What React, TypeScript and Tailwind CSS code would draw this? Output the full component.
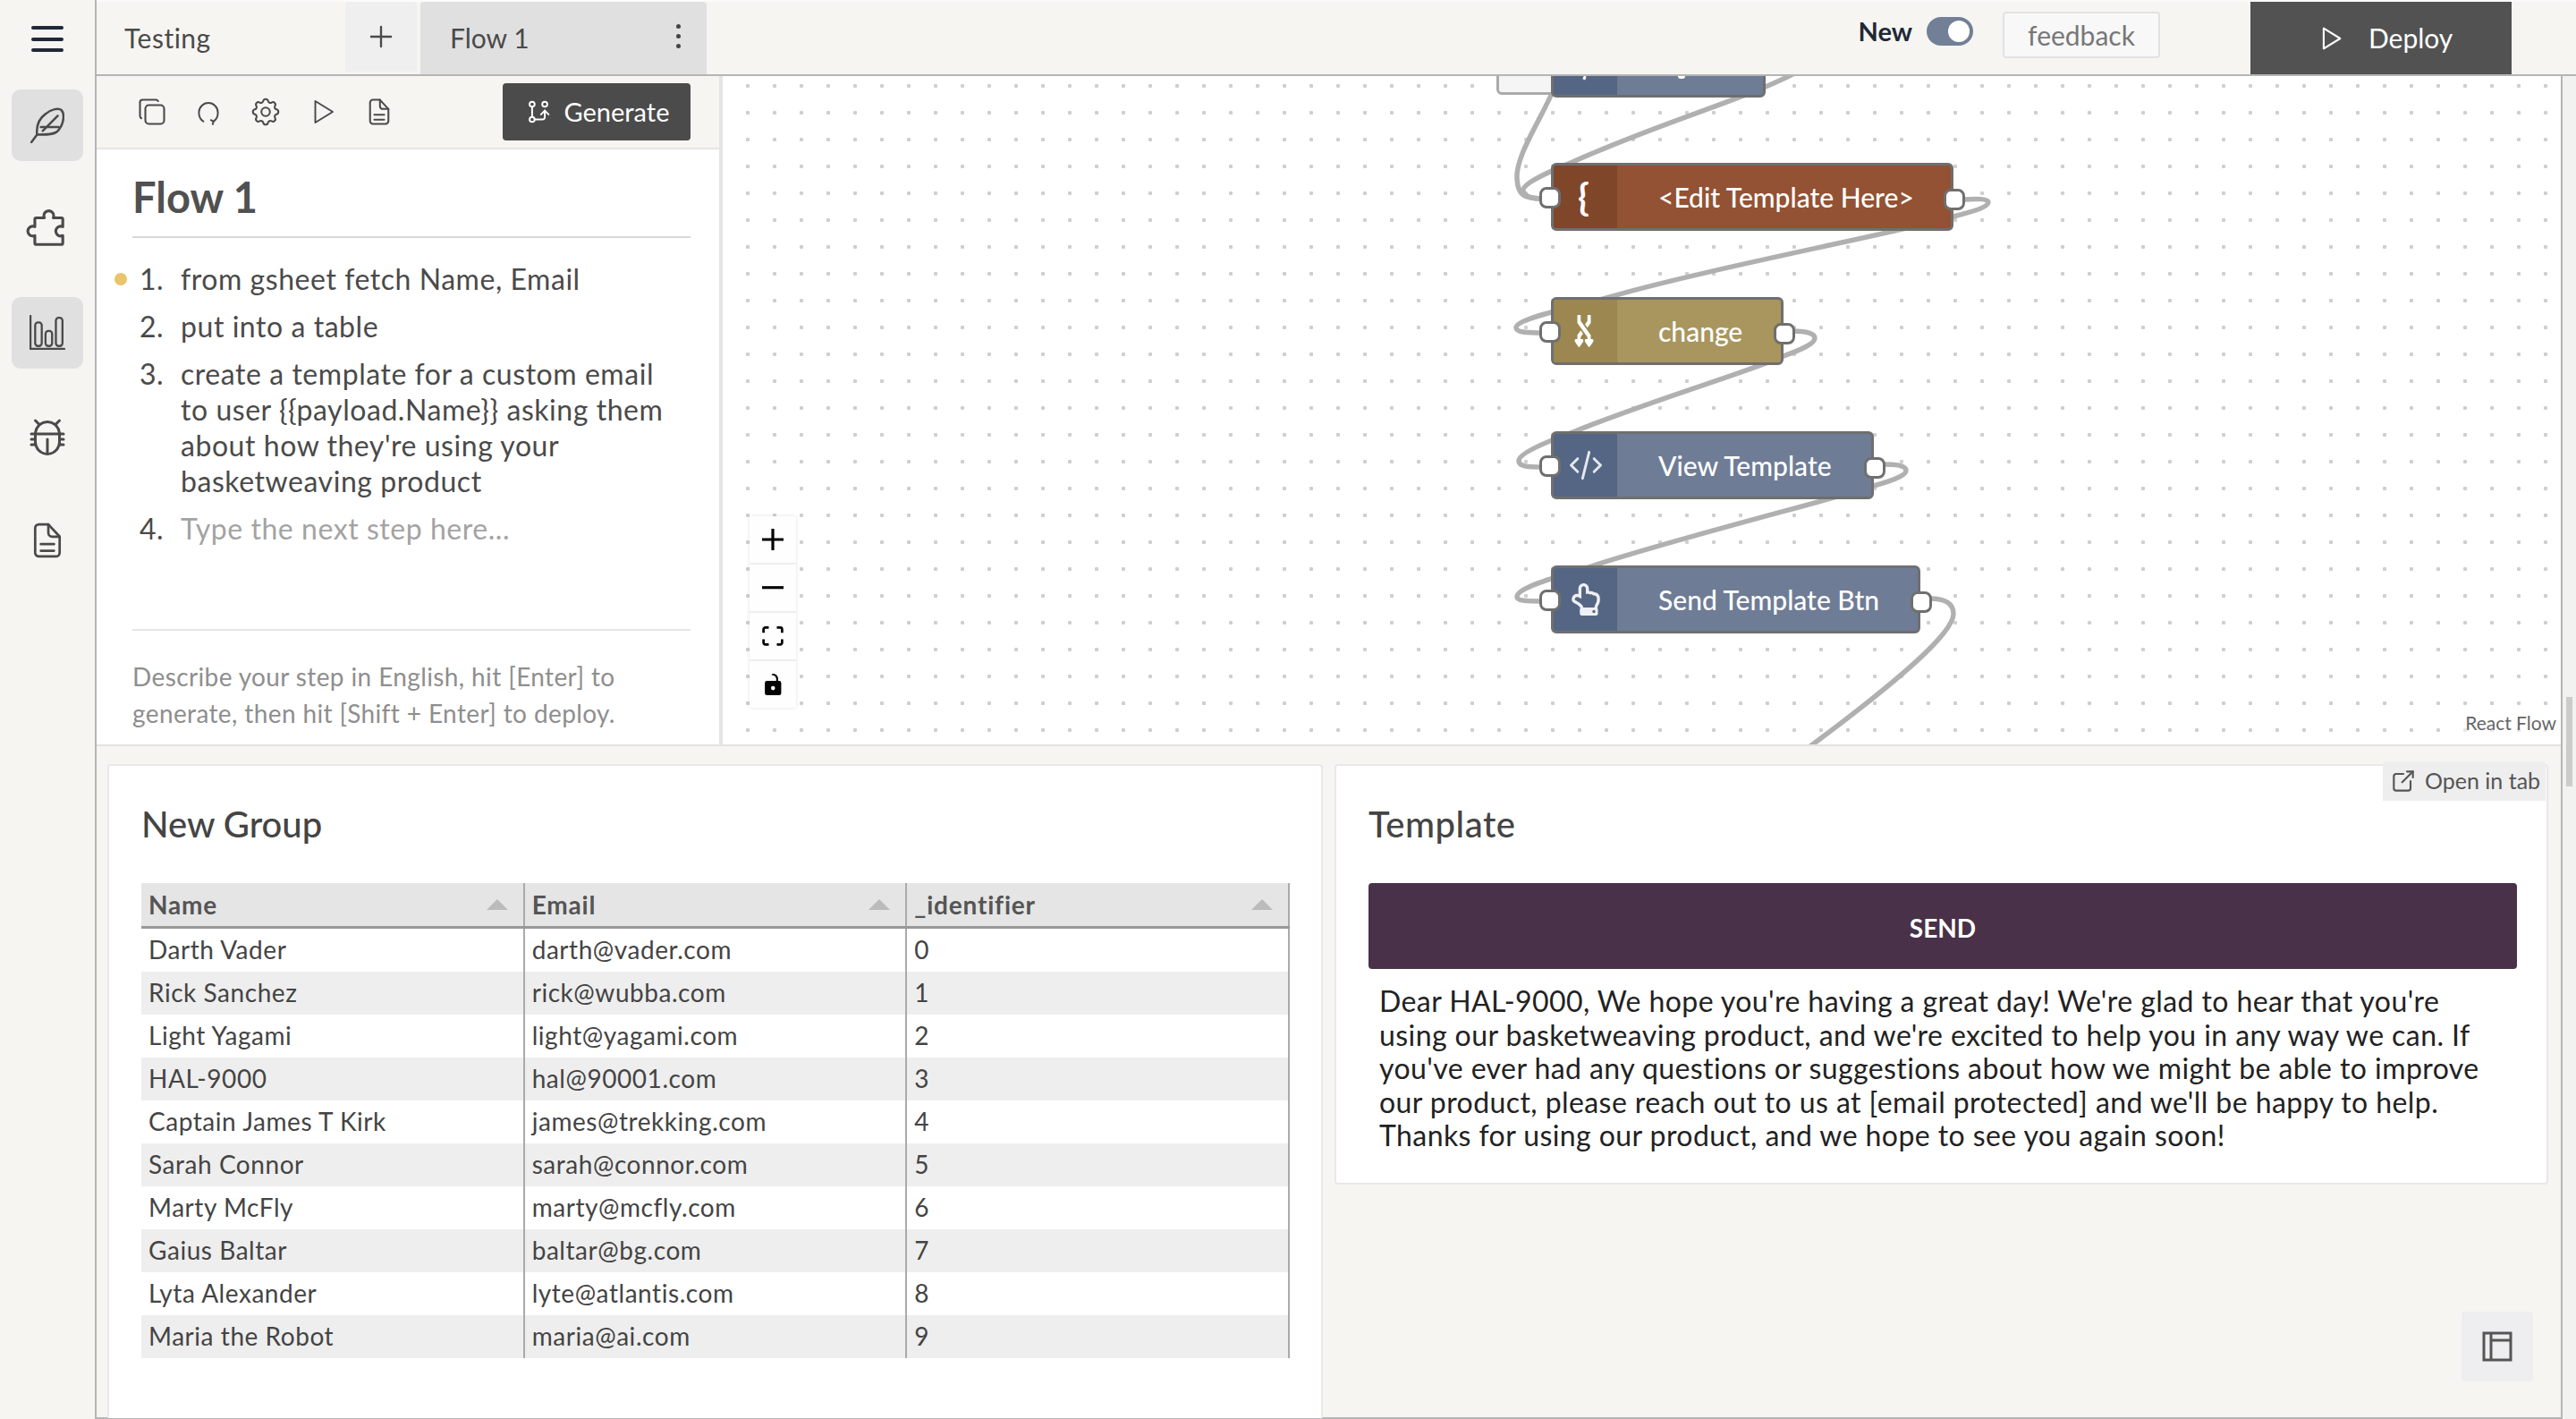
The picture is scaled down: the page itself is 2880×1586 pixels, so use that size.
import React from "react";
import { TbCopy, TbSettings, TbPlayerPlay, TbGitBranch, TbExternalLink, TbPlus, TbCode } from "react-icons/tb";
import { PiBugBeetle, PiPuzzlePiece } from "react-icons/pi";
import { FaRandom, FaRegHandPointUp } from "react-icons/fa";

const rows = [
  ["Darth Vader", "darth@vader.com", "0"],
  ["Rick Sanchez", "rick@wubba.com", "1"],
  ["Light Yagami", "light@yagami.com", "2"],
  ["HAL-9000", "hal@90001.com", "3"],
  ["Captain James T Kirk", "james@trekking.com", "4"],
  ["Sarah Connor", "sarah@connor.com", "5"],
  ["Marty McFly", "marty@mcfly.com", "6"],
  ["Gaius Baltar", "baltar@bg.com", "7"],
  ["Lyta Alexander", "lyte@atlantis.com", "8"],
  ["Maria the Robot", "maria@ai.com", "9"],
];

const edges = [
  "M1737 100 C1722 135 1694 175 1696 200 C1697 218 1704 222 1724 222",
  "M2010 80 C1950 112 1860 135 1756 182 C1742 188 1704 203 1703 212 C1702 219 1712 222 1724 222",
  "M2195 223 C2210 222 2223 222 2223 226 C2223 232 2200 238 2184 242 C2150 254 1900 302 1796 333 C1760 343 1695 356 1695 366 C1695 372 1710 372 1724 372",
  "M2004 370 C2018 370 2029 372 2029 378 C2029 385 2010 392 1994 398 C1960 414 1850 446 1761 482 C1745 488 1698 505 1698 515 C1698 522 1710 522 1724 522",
  "M2105 519 C2118 519 2131 520 2131 526 C2131 532 2112 538 2095 543 C2065 554 1880 600 1779 633 C1755 641 1696 655 1696 667 C1696 672 1710 672 1724 672",
  "M2158 669 C2175 669 2184 675 2184 686 C2184 710 2110 770 2024 834",
];

function Handle({ className }: { className: string }) {
  return <div className={`absolute w-[24px] h-[24px] bg-white border-[3px] border-[#6f6f6f] rounded-[8px] ${className}`} />;
}

function Node({ pos, iconBg, bodyBg, icon, label, leftHandle, rightHandle }: { pos: string; iconBg: string; bodyBg: string; icon: React.ReactNode; label: string; leftHandle: string; rightHandle: string }) {
  return (
    <div className={`absolute h-[76px] flex ${pos}`}>
      <div className={`w-full h-full rounded-[6px] border-[3px] border-[#6f6f6f] flex overflow-hidden ${bodyBg}`}>
        <div className={`w-[71px] h-full flex items-center justify-center text-white ${iconBg}`}>{icon}</div>
        <div className="pl-[46px] flex items-center text-white text-[30px] font-medium whitespace-nowrap">{label}</div>
      </div>
      <Handle className={`left-[-13px] ${leftHandle}`} />
      <Handle className={`right-[-13px] ${rightHandle}`} />
    </div>
  );
}

function NavItem({ active, children }: { active?: boolean; children: React.ReactNode }) {
  return <div className={`w-[80px] h-[80px] rounded-[10px] flex items-center justify-center text-[#4a4a4a] ${active ? "bg-[#e0e0e0]" : ""}`}>{children}</div>;
}

function ControlBtn({ children, last }: { children: React.ReactNode; last?: boolean }) {
  return <div className={`w-[52px] h-[52px] bg-[#fefefe] flex items-center justify-center ${last ? "" : "mb-[2px]"}`}>{children}</div>;
}

function Caret() {
  return <div className="w-0 h-0 border-l-[12px] border-r-[12px] border-b-[12px] border-l-transparent border-r-transparent border-b-[#bbbbbb]" />;
}

function DocIcon({ w, h }: { w: number; h: number }) {
  return (
    <svg width={w} height={h} viewBox="0 0 30 38" fill="none" stroke="currentColor" strokeWidth="2.6" strokeLinejoin="round" strokeLinecap="round">
      <path d="M2 6a4 4 0 0 1 4-4h10l12 13v17a4 4 0 0 1-4 4H6a4 4 0 0 1-4-4z" />
      <path d="M16 2v9a4 4 0 0 0 4 4h8" />
      <path d="M8 23h14M8 30h14" />
    </svg>
  );
}

export default function App() {
  return (
    <div className="w-[2880px] h-[1586px] flex overflow-hidden bg-[#f6f5f2] font-[Lato,'Noto_Sans',sans-serif] text-[#4a4a4a]">
      <aside className="w-[108px] shrink-0 border-r-2 border-[#b5b5b5] flex flex-col items-center">
        <div className="h-[100px] w-full flex flex-col items-center pt-[29px] gap-[8.5px]">
          <div className="w-[36px] h-[4px] rounded bg-[#1f2937]" />
          <div className="w-[36px] h-[4px] rounded bg-[#1f2937]" />
          <div className="w-[36px] h-[4px] rounded bg-[#1f2937]" />
        </div>
        <div className="flex flex-col gap-[36px]">
          <NavItem active>
            <svg width="38" height="40" viewBox="0 0 36 38" fill="none" stroke="currentColor" strokeWidth="2.4" strokeLinecap="round" strokeLinejoin="round">
              <path d="M7 29C6 20 9 12 16 7C22 2 30 0 33 3C37 8 35 20 28 26C24 29 16 29 7 29Z" />
              <path d="M1 37L7 29" />
              <path d="M29 9L13 25" />
              <path d="M11 21H30" />
            </svg>
          </NavItem>
          <NavItem><PiPuzzlePiece size={50} /></NavItem>
          <NavItem active>
            <svg width="40" height="40" viewBox="0 0 38 38" fill="none" stroke="currentColor" strokeWidth="2.2" strokeLinecap="round" strokeLinejoin="round">
              <path d="M1 1V36H37" />
              <rect x="6" y="8" width="7" height="25" rx="3" />
              <rect x="17" y="17" width="7" height="16" rx="3" />
              <rect x="28" y="3" width="7" height="30" rx="3" />
            </svg>
          </NavItem>
          <NavItem><PiBugBeetle size={48} /></NavItem>
          <NavItem><DocIcon w={32} h={40} /></NavItem>
        </div>
      </aside>

      <div className="flex-1 min-w-0 flex flex-col">
        <header className="h-[85px] shrink-0 flex border-t-2 border-t-[#fbfbfa] border-b-2 border-b-[#b5b5b5]">
          <div className="w-[278px] pl-[31px] flex items-center text-[30px] tracking-[0.5px]">Testing</div>
          <div className="w-[80px] h-[78px] bg-[#efefef] rounded-t-[4px] flex items-center justify-center"><TbPlus size={38} strokeWidth={1.5} /></div>
          <div className="ml-[4px] w-[320px] h-[81px] bg-[#e0e0e0] rounded-t-[4px] flex items-center justify-between pl-[33px] pr-[29px] text-[30px]">
            <span>Flow 1</span>
            <div className="flex flex-col gap-[6px] mb-[4px]">
              <div className="w-[5px] h-[5px] rounded-full bg-[#444]" />
              <div className="w-[5px] h-[5px] rounded-full bg-[#444]" />
              <div className="w-[5px] h-[5px] rounded-full bg-[#444]" />
            </div>
          </div>
          <div className="flex-1 flex items-start justify-end">
            <span className="mt-[11px] text-[29px] font-bold text-[#1f2937]">New</span>
            <div className="ml-[16px] mt-[17px] w-[52px] h-[32px] rounded-full bg-[#718096] flex items-center justify-end pr-[4px]">
              <div className="w-[24px] h-[24px] rounded-full bg-white" />
            </div>
            <div className="ml-[33px] mt-[11px] w-[176px] h-[52px] border-2 border-[#e2e2e2] rounded-[4px] bg-[#f8f8f8] flex items-center justify-center text-[30px] text-[#777]">feedback</div>
            <div className="ml-[101px] mr-[72px] w-[292px] h-[81px] bg-[#525252] flex items-center text-white text-[30px] pl-[72px] gap-[26px]">
              <TbPlayerPlay size={34} strokeWidth={1.5} />
              <span>Deploy</span>
            </div>
          </div>
        </header>

        <div className="flex-1 min-h-0 flex">
          <div className="flex-1 min-w-0 flex flex-col border-r-2 border-b-2 border-[#b5b5b5]">
            <div className="h-[749px] shrink-0 flex border-b-2 border-[#e2e2e0]">
              <section className="w-[700px] shrink-0 border-r-4 border-[#e5e5e5] flex flex-col bg-white">
                <div className="h-[82px] shrink-0 bg-[#f6f5f2] border-b-2 border-[#e5e5e3] flex items-center justify-between pl-[44px] pr-[32px]">
                  <div className="flex items-center gap-[28px] text-[#4a4a4a]">
                    <TbCopy size={36} strokeWidth={1.4} />
                    <svg width="34" height="34" viewBox="0 0 24 24" fill="none" stroke="currentColor" strokeWidth="1.4" strokeLinecap="round" strokeLinejoin="round"><path d="M8 19.5C5.5 18 4.5 15.5 4.5 12.5a7.5 7.5 0 0 1 15 0c0 3-1 5.5-3.5 7" /><path d="M14 18.5l2 1.2-.6 2.1" /></svg>
                    <TbSettings size={38} strokeWidth={1.3} />
                    <TbPlayerPlay size={36} strokeWidth={1.3} className="-ml-[2px]" />
                    <div className="ml-[6px] flex"><DocIcon w={24} h={30} /></div>
                  </div>
                  <div className="w-[210px] h-[64px] rounded-[4px] bg-[#4b4b4b] text-white text-[29px] flex items-center justify-center gap-[11px]">
                    <TbGitBranch size={34} strokeWidth={1.4} />
                    <span>Generate</span>
                  </div>
                </div>
                <div className="flex-1 px-[40px] relative">
                  <h1 className="mt-[26px] h-[54px] leading-[54px] text-[47px] font-bold text-[#505050]">Flow 1</h1>
                  <div className="mt-[17px] h-[2px] w-[624px] bg-[#d8d8d8]" />
                  <div className="absolute left-[20px] top-[138px] w-[14px] h-[14px] rounded-full bg-[#e9c46a]" />
                  <ol className="mt-[26px] h-[411px] text-[32px] leading-[40px] tracking-[0.55px] text-[#4a4a4a] flex flex-col gap-[13px]">
                    <li className="flex"><span className="w-[54px] pl-[8px] shrink-0">1.</span><span>from gsheet fetch Name, Email</span></li>
                    <li className="flex"><span className="w-[54px] pl-[8px] shrink-0">2.</span><span>put into a table</span></li>
                    <li className="flex"><span className="w-[54px] pl-[8px] shrink-0">3.</span><span className="w-[560px]">create a template for a custom email to user {"{{payload.Name}}"} asking them about how they're using your basketweaving product</span></li>
                    <li className="flex"><span className="w-[54px] pl-[8px] shrink-0">4.</span><span className="text-[#a3a3a3]">Type the next step here...</span></li>
                  </ol>
                  <div className="h-[2px] w-[624px] bg-[#e5e5e5]" />
                  <p className="mt-[31px] w-[624px] text-[28px] leading-[41px] tracking-[0.38px] text-[#8e8e8e]">Describe your step in English, hit [Enter] to generate, then hit [Shift + Enter] to deploy.</p>
                </div>
              </section>

              <div className="flex-1 min-w-0 relative overflow-hidden bg-white bg-[radial-gradient(circle,#cfcfcf_2px,transparent_2.5px)] bg-[size:30px_30px] bg-[position:13px_-4px]">
                <svg className="absolute left-0 top-0" width="2057" height="747" viewBox="808 85 2057 747" fill="none" stroke="#b0b0b0" strokeWidth="5.5">
                  {edges.map((d, i) => <path key={i} d={d} />)}
                </svg>

                <div className="absolute left-[865px] top-[-49px] w-[80px] h-[70px] bg-[#f5f5f5] border-[3px] border-[#aaaaaa] rounded-[6px]" />
                <div className="absolute left-[926px] top-[-52px] w-[240px] h-[76px] rounded-[6px] border-[3px] border-[#6f6f6f] bg-[#6f7c96] overflow-hidden flex">
                  <div className="w-[71px] h-full bg-[#556685]" />
                </div>
                <div className="absolute left-[962px] top-0 w-[3px] h-[4px] bg-white rotate-[20deg]" />
                <div className="absolute left-[1068px] top-0 w-[8px] h-[3px] bg-white rounded-b" />

                <Node pos="left-[926px] top-[97px] w-[450px]" iconBg="bg-[#7f462a]" bodyBg="bg-[#935233]" icon={<span className="text-[42px] font-bold leading-none mr-[4px]">{"{"}</span>} label="<Edit Template Here>" leftHandle="top-[27px]" rightHandle="top-[29px]" />
                <Node pos="left-[926px] top-[247px] w-[260px]" iconBg="bg-[#9b874f]" bodyBg="bg-[#a9965e]" icon={<FaRandom preserveAspectRatio="none" className="w-[36px] h-[24px] rotate-90 mr-[4px]" />} label="change" leftHandle="top-[27px]" rightHandle="top-[29px]" />
                <Node pos="left-[926px] top-[397px] w-[361px]" iconBg="bg-[#556685]" bodyBg="bg-[#6f7c96]" icon={<TbCode size={44} strokeWidth={1.6} className="opacity-85" />} label="View Template" leftHandle="top-[27px]" rightHandle="top-[29px]" />
                <Node pos="left-[926px] top-[547px] w-[413px]" iconBg="bg-[#556685]" bodyBg="bg-[#6f7c96]" icon={<FaRegHandPointUp size={36} className="opacity-90" />} label="Send Template Btn" leftHandle="top-[27px]" rightHandle="top-[29px]" />

                <div className="absolute left-[30px] top-[492px] flex flex-col shadow-[0_0_4px_rgba(0,0,0,0.12)] bg-[#eeeeee]">
                  <ControlBtn><svg width="24" height="24" viewBox="0 0 32 32" fill="#000"><path d="M32 18.133H18.133V32h-4.266V18.133H0v-4.266h13.867V0h4.266v13.867H32z" /></svg></ControlBtn>
                  <ControlBtn><svg width="24" height="4" viewBox="0 0 32 5" fill="#000"><path d="M0 0h32v4.2H0z" /></svg></ControlBtn>
                  <ControlBtn><svg width="24" height="22" viewBox="0 0 32 30" fill="#000"><path d="M3.692 4.63c0-.53.4-.938.939-.938h5.215V0H4.708C2.13 0 0 2.054 0 4.63v5.216h3.692V4.631zM27.354 0h-5.2v3.692h5.17c.53 0 .984.4.984.939v5.215H32V4.631A4.624 4.624 0 0027.354 0zm.954 24.83c0 .532-.4.94-.939.94h-5.215v3.768h5.215c2.577 0 4.631-2.13 4.631-4.707v-5.139h-3.692v5.139zm-23.677.94c-.531 0-.939-.4-.939-.94v-5.138H0v5.139c0 2.577 2.13 4.707 4.708 4.707h5.138V25.77H4.631z" /></svg></ControlBtn>
                  <ControlBtn last><svg width="19" height="24" viewBox="0 0 25 32" fill="#000"><path d="M21.333 10.667H19.81V7.619C19.81 3.429 16.38 0 12.19 0c-4.114 1.828-1.37 2.133.305 2.438 1.676.305 4.42 2.59 4.42 5.181v3.048H3.047A3.056 3.056 0 000 13.714v15.238A3.056 3.056 0 003.048 32h18.285a3.056 3.056 0 003.048-3.048V13.714a3.056 3.056 0 00-3.048-3.047zM12.19 24.533a3.056 3.056 0 01-3.047-3.047 3.056 3.056 0 013.047-3.048 3.056 3.056 0 013.048 3.048 3.056 3.056 0 01-3.048 3.047z" /></svg></ControlBtn>
                </div>

                <div className="absolute right-[3px] top-[709px] text-[21px] leading-[28px] text-[#666] bg-white/50 px-[2px]">React Flow</div>
              </div>
            </div>

            <div className="flex-1 min-h-0 relative flex items-start pl-[12px] pr-[14px] pt-[20px] gap-[13px]">
              <section className="w-[1360px] h-[731px] bg-white border-x-2 border-t-2 border-[#e8e8e6] rounded-t-[4px] pl-[36px]">
                <h2 className="mt-[41px] h-[48px] leading-[48px] text-[40px] font-medium text-[#444]">New Group</h2>
                <table className="mt-[42px] w-[1284px] table-fixed border-collapse text-[28px] leading-[46px] text-[#444] tracking-[0.55px]">
                  <thead>
                    <tr className="bg-[#e5e5e5] border-b-[3px] border-[#999] font-bold text-[#555]">
                      {["Name", "Email", "_identifier"].map((h) => (
                        <th key={h} className="h-[49px] pl-[8px] pr-[17px] text-left font-bold tracking-[0.8px] border-r-2 border-[#aaaaaa]">
                          <div className="flex items-center justify-between"><span>{h}</span><Caret /></div>
                        </th>
                      ))}
                    </tr>
                  </thead>
                  <tbody>
                    {rows.map((r, i) => (
                      <tr key={r[0]} className={i % 2 ? "bg-[#eeeeee]" : "bg-white"}>
                        {r.map((c, j) => <td key={j} className="h-[48px] p-0 pl-[8px] pb-[2px] border-r-2 border-[#aaaaaa] whitespace-nowrap">{c}</td>)}
                      </tr>
                    ))}
                  </tbody>
                </table>
              </section>

              <section className="w-[1358px] h-[470px] bg-white border-2 border-[#e8e8e6] rounded-[4px] pl-[36px]">
                <h2 className="mt-[41px] h-[48px] leading-[48px] text-[40px] font-medium text-[#444] tracking-[0.5px]">Template</h2>
                <div className="mt-[42px] w-[1284px] h-[96px] rounded-[4px] bg-[#483149] text-white text-[28px] font-bold pt-[3px] flex items-center justify-center">SEND</div>
                <p className="mt-[17px] pl-[12px] w-[1270px] text-[32px] leading-[37.5px] tracking-[0.42px] text-[#222]">Dear HAL-9000, We hope you're having a great day! We're glad to hear that you're using our basketweaving product, and we're excited to help you in any way we can. If you've ever had any questions or suggestions about how we might be able to improve our product, please reach out to us at [email protected] and we'll be happy to help. Thanks for using our product, and we hope to see you again soon!</p>
              </section>

              <div className="absolute right-[17px] top-[17px] w-[182px] h-[44px] bg-[#eeeeee] rounded-t-[4px] flex items-center pl-[7px] gap-[8px] text-[25px] text-[#555]">
                <TbExternalLink size={32} strokeWidth={1.6} />
                <span>Open in tab</span>
              </div>

              <div className="absolute right-[31px] bottom-[40px] w-[80px] h-[78px] rounded-[4px] bg-[#eeeef0] flex items-center justify-center">
                <svg width="34" height="34" viewBox="0 0 34 34" fill="none" stroke="#555" strokeWidth="3"><path d="M2 2h30v30H2z" /><path d="M10 2v30M10 10h22" /></svg>
              </div>
            </div>
          </div>

          <div className="w-[15px] shrink-0 bg-[#f2f2f1] pt-[694px] pl-[4px]">
            <div className="w-[7px] h-[100px] bg-[#cccccc]" />
          </div>
        </div>
      </div>
    </div>
  );
}
